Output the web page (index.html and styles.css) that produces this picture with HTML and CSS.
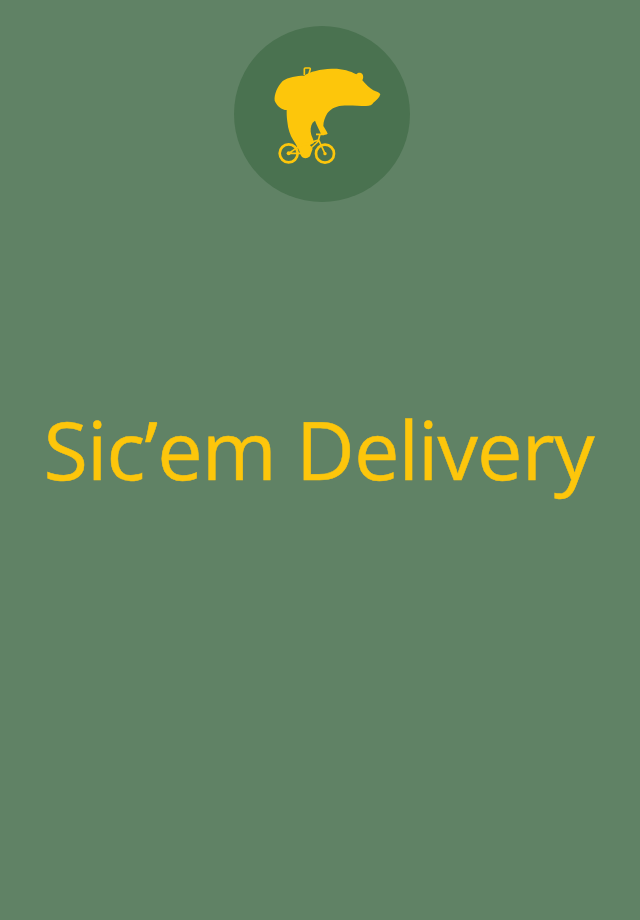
FILE: index.html
```html
<!DOCTYPE html>
<html lang="en">
<head>
<meta charset="utf-8">
<title>Sic'em Delivery</title>
<link rel="stylesheet" href="styles.css">
</head>
<body>
<main class="poster">
  <div class="badge">
    <svg class="bear" viewBox="0 0 390 345" aria-hidden="true">
      <path class="fill" d="M132 62 C150 50 180 42 215 41 C245 40 270 47 289 58 C292 52 302 51 307 57 C311 63 310 70 307 76 C318 88 328 99 340 106 C350 110 358 113 361 118 C358 128 350 136 340 143 C336 150 330 152 318 153 C295 153 270 150 245 152 C225 154 210 163 202 175 C195 187 190 200 190 213 C195 222 200 228 203 236 C197 240 190 241 184 240 C180 228 172 215 165 197 L158 203 C152 212 150 226 154 240 C158 250 161 257 162 264 L150 270 L158 281 L150 304 C140 313 128 312 122 300 C118 285 110 272 100 256 C90 240 84 222 82 200 C80 185 80 175 80 165 C65 165 50 152 44 137 C42 118 52 95 68 78 C85 66 110 62 132 62 Z"/>
      <path class="line thin" d="M133 60 V42 Q133 39 136 39 H148 Q151 39 151 42 L146 60"/>
      <circle class="line" cx="86" cy="295" r="27"/>
      <circle class="line" cx="195" cy="296" r="27"/>
      <circle class="fill" cx="86" cy="295" r="6"/>
      <circle class="fill" cx="195" cy="296" r="5"/>
      <path class="line thin" d="M86 295 L122 271 L176 255 L195 296 M130 300 L176 258 M86 295 H130 M175 256 L180 238 M168 238 H192 M122 271 L150 268"/>
    </svg>
  </div>
  <h1 class="title">Sic’em Delivery</h1>
</main>
</body>
</html>
```

FILE: styles.css
```css
html, body {
  margin: 0;
  height: 100%;
}

body {
  background: #608265;
}

.poster {
  display: flex;
  flex-direction: column;
  align-items: center;
  height: 920px;
  overflow: hidden;
}

.badge {
  display: flex;
  align-items: center;
  justify-content: center;
  width: 176px;
  height: 176px;
  margin: 26px 0 0 4px;
  border-radius: 50%;
  background: #4a7250;
}

.bear {
  display: block;
  width: 130px;
  height: 115px;
  margin-left: 6px;
  margin-top: -3px;
}

.fill {
  fill: #fdc60b;
}

.line {
  fill: none;
  stroke: #fdc60b;
  stroke-width: 8;
}

.line.thin {
  stroke-width: 5;
}

.title {
  margin: 192px 3px 0 0;
  font-family: "Open Sans", "Noto Sans", sans-serif;
  font-size: 81px;
  font-weight: 400;
  line-height: 110px;
  letter-spacing: -0.9px;
  color: #fdc60b;
  -webkit-text-stroke: 0.5px #fdc60b;
  white-space: nowrap;
}
```
